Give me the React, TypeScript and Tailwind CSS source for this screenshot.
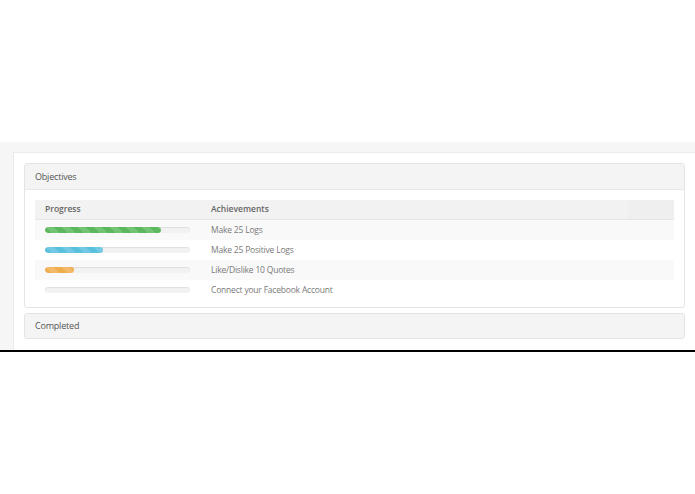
import React from "react"

const rows = [
  { pct: 80, color: "bg-[#5cb85c]", label: "Make 25 Logs" },
  { pct: 40, color: "bg-[#5bc0de]", label: "Make 25 Positive Logs" },
  { pct: 20, color: "bg-[#f0ad4e]", label: "Like/Dislike 10 Quotes" },
  { pct: 0, color: "bg-[#5cb85c]", label: "Connect your Facebook Account" },
]

function Bar({ pct, color }: { pct: number; color: string }) {
  return (
    <div className="h-[6px] w-[145px] rounded-full bg-[#f2f2f2] shadow-[inset_0_1px_1px_rgba(0,0,0,0.08)] overflow-hidden">
      {pct > 0 && (
        <div
          className={`h-full rounded-full ${color} bg-[linear-gradient(45deg,rgba(255,255,255,.15)_25%,transparent_25%,transparent_50%,rgba(255,255,255,.15)_50%,rgba(255,255,255,.15)_75%,transparent_75%,transparent)] bg-[length:16px_16px]`}
          style={{ width: pct + "%" }}
        />
      )}
    </div>
  )
}

export default function App() {
  return (
    <div className="w-[695px] h-[494px] bg-white font-['Open_Sans',sans-serif] overflow-hidden">
      <div className="h-[142px]" />
      <div className="h-[208px] bg-[#f6f6f6] pl-[13px] pt-[10px]">
        <div className="h-full bg-white border-l border-t border-[#ebebeb] pl-[10px] pr-[10px] pt-[10px]">
          {/* objectives panel */}
          <div className="h-[145px] rounded-[3px] border border-[#e4e4e4]">
            <div className="h-[26px] bg-[#f4f4f4] border-b border-[#e8e8e8] px-[10px] flex items-center text-[9px] tracking-[-0.2px] text-[#555]">
              Objectives
            </div>
            <div className="p-[10px] pb-0">
              <div className="flex h-[20px] bg-[#f2f2f2] border-b border-[#e6e6e6] text-[8.5px] font-semibold text-[#666]">
                <div className="w-[166px] pl-[10px] flex items-center">Progress</div>
                <div className="w-[427px] pl-[10px] flex items-center">Achievements</div>
                <div className="flex-1 bg-[#efefef]" />
              </div>
              {rows.map((r, i) => (
                <div
                  key={i}
                  className={`flex h-[20px] items-center text-[8.5px] tracking-[-0.2px] text-[#7a7a7a] ${i % 2 === 0 ? "bg-[#f9f9f9]" : "bg-white"}`}
                >
                  <div className="w-[166px] pl-[10px]">
                    <Bar pct={r.pct} color={r.color} />
                  </div>
                  <div className="pl-[10px]">{r.label}</div>
                </div>
              ))}
            </div>
          </div>
          {/* completed panel */}
          <div className="mt-[5px] h-[26px] rounded-[3px] border border-[#e4e4e4] bg-[#f4f4f4] px-[10px] flex items-center text-[9px] tracking-[-0.2px] text-[#555]">
            Completed
          </div>
        </div>
      </div>
      <div className="h-[2px] bg-black" />
    </div>
  )
}
